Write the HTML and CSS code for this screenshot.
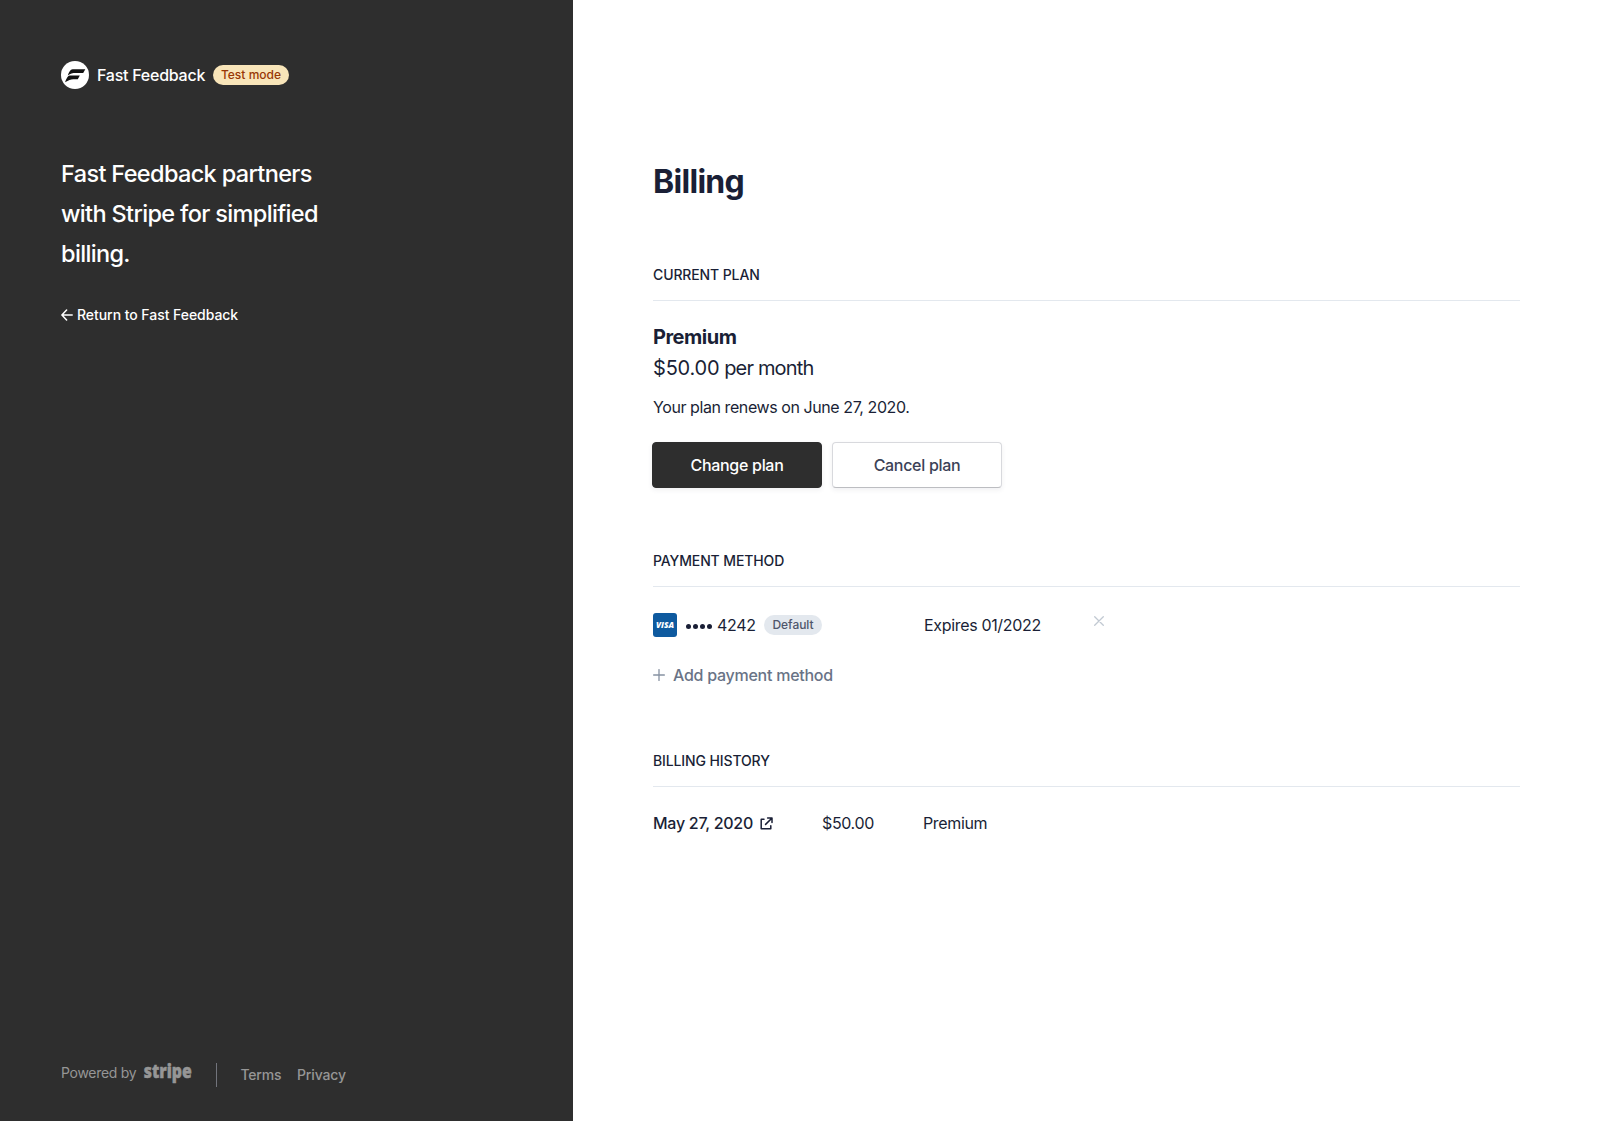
FILE: index.html
```html
<!DOCTYPE html>
<html lang="en">
<head>
<meta charset="utf-8">
<title>Billing</title>
<link rel="stylesheet" href="styles.css">
</head>
<body>
<div class="layout">
  <aside class="sidebar">
    <div class="brand">
      <svg class="brand-logo" width="28" height="28" viewBox="0 0 28 28"><circle cx="14" cy="14" r="14" fill="#fff"/><path d="M11.6 8.3H24.3L22.2 12H14.8C11.4 12 9.5 12.6 6.8 14.6C8 11 9.2 8.6 11.6 8.3ZM8.8 14.6H18.8L16.8 18.2H12.2C9.6 18.2 7.8 19.4 4 21.3C5.2 18.7 6.4 15 8.8 14.6Z" fill="#111"/></svg>
      <span class="brand-name">Fast Feedback</span>
      <span class="badge badge-test">Test mode</span>
    </div>
    <h2 class="tagline">Fast Feedback partners<br>with Stripe for simplified<br>billing.</h2>
    <a class="return"><svg width="12" height="12" viewBox="0 0 12 12" fill="none" stroke="#fff" stroke-width="1.5" stroke-linecap="round" stroke-linejoin="round"><path d="M11.2 6H1M5.6 1L.9 6l4.7 5"/></svg><span>Return to Fast Feedback</span></a>
    <footer class="footer">
      <span class="powered">Powered by</span>
      <svg class="stripe" width="49" height="24" viewBox="0 0 49 24"><text x="0.8" y="15.3" textLength="48" lengthAdjust="spacingAndGlyphs">stripe</text></svg>
      <span class="divider"></span>
      <a class="terms">Terms</a>
      <a class="privacy">Privacy</a>
    </footer>
  </aside>
  <main class="main">
    <h1 class="title">Billing</h1>
    <section class="section">
      <h3 class="section-title">Current plan</h3>
      <div class="plan-name">Premium</div>
      <div class="plan-price"><span class="price">$50.00</span> per month</div>
      <div class="plan-renewal">Your plan renews on June 27, 2020.</div>
      <div class="actions">
        <button class="button button-primary">Change plan</button>
        <button class="button button-secondary">Cancel plan</button>
      </div>
    </section>
    <section class="section section-method">
      <h3 class="section-title">Payment method</h3>
      <div class="method-row">
        <div class="card">
          <svg width="24" height="24" viewBox="0 0 24 24"><rect width="24" height="24" rx="3" fill="#0e5a9f"/><text class="visa" x="3" y="15" textLength="18" lengthAdjust="spacingAndGlyphs">VISA</text></svg>
          <span class="dots"><i></i><i></i><i></i><i></i></span>
          <span class="digits">4242</span>
          <span class="badge badge-default">Default</span>
        </div>
        <span class="expires">Expires 01/2022</span>
        <svg class="remove" width="10" height="10" viewBox="0 0 10 10" stroke="#c1c9d2" stroke-width="1.3" stroke-linecap="round"><path d="M.7.7l8.6 8.6M9.3.7L.7 9.3"/></svg>
      </div>
      <a class="add"><svg width="12" height="12" viewBox="0 0 12 12" stroke="#8792a2" stroke-width="1.3" stroke-linecap="round"><path d="M6 .6v10.8M.6 6h10.8"/></svg><span>Add payment method</span></a>
    </section>
    <section class="section">
      <h3 class="section-title">Billing history</h3>
      <div class="history-row">
        <a class="invoice"><span>May 27, 2020</span><svg width="13" height="13" viewBox="0 0 13 13" fill="none" stroke="#1a1f36" stroke-width="1.5" stroke-linejoin="round" stroke-linecap="round"><path d="M4 2.2H1.2v9.6h9.6V8.7M7.6 1H12v4.4M11.8 1.2L5.6 7.4"/></svg></a>
        <span class="amount">$50.00</span>
        <span class="product">Premium</span>
      </div>
    </section>
  </main>
</div>
</body>
</html>
```
FILE: styles.css
```css
* { box-sizing: border-box; }
body {
  margin: 0;
  font-family: Inter, "Liberation Sans", sans-serif;
  font-size: 16px;
  line-height: 24px;
  color: #1a1f36;
  background: #fff;
}
h1, h2, h3 { margin: 0; font-weight: 500; }
.layout { display: flex; height: 1121px; }
.sidebar {
  display: flex;
  flex-direction: column;
  width: 573px;
  flex: none;
  padding: 61px 61px 34px;
  background: #2e2e2e;
  color: #fff;
  white-space: nowrap;
}
.brand { display: flex; align-items: center; height: 28px; }
.brand-name { margin-left: 8px; width: 108px; font-weight: 500; letter-spacing: -0.25px; }
.badge {
  display: flex;
  align-items: center;
  justify-content: center;
  height: 20px;
  border-radius: 10px;
  font-size: 12px;
  font-weight: 500;
  line-height: 20px;
}
.badge-test { margin-left: 8px; width: 76px; background: #f8e5b9; color: #983705; letter-spacing: 0.02px; }
.tagline { margin-top: 65px; font-size: 23.5px; line-height: 40px; letter-spacing: -0.65px; }
.return { display: flex; align-items: center; gap: 4px; margin-top: 31px; font-size: 14px; font-weight: 500; line-height: 20px; letter-spacing: -0.05px; }
.footer { display: flex; align-items: center; height: 24px; margin-top: auto; font-size: 14px; line-height: 20px; color: #969696; }
.powered { width: 75px; margin-top: -4px; letter-spacing: -0.3px; }
.stripe { margin-left: 7px; overflow: visible; }
.stripe text { font: 800 19px "Open Sans", sans-serif; fill: #969696; stroke: #969696; stroke-width: 0.5px; }
.divider { width: 1px; height: 24px; margin-left: 24px; background: #72747c; }
.terms { width: 40px; margin-left: 23.5px; font-weight: 500; letter-spacing: -0.2px; }
.privacy { margin-left: 16.5px; font-weight: 500; letter-spacing: -0.15px; }

.main { flex: 1; padding: 162px 77px 0 80px; }
.title { font-size: 32px; font-weight: 700; line-height: 40px; letter-spacing: -0.7px; }
.section { margin-top: 64px; }
.title + .section { margin-top: 63px; }
.section-method { margin-top: 63px; }
.section-title {
  padding-bottom: 15px;
  border-bottom: 1px solid #e3e8ee;
  font-size: 14px;
  line-height: 20px;
  letter-spacing: -0.12px;
  text-transform: uppercase;
}
.plan-name { margin-top: 22px; font-size: 20px; font-weight: 700; line-height: 28px; letter-spacing: -0.5px; }
.plan-price { margin-top: 3px; font-size: 20px; line-height: 28px; letter-spacing: -0.83px; }
.price { letter-spacing: -0.2px; }
.plan-renewal { margin-top: 13px; letter-spacing: -0.42px; }
.actions { display: flex; gap: 10px; margin: 23px 0 0 -1px; }
.button {
  width: 170px;
  height: 46px;
  padding: 0;
  border: 1px solid #2e2e2e;
  border-radius: 4px;
  font: 500 16px/24px Inter, "Liberation Sans", sans-serif;
  letter-spacing: -0.3px;
}
.button-primary { background: #2e2e2e; color: #fff; box-shadow: 0 2px 5px rgba(60, 66, 87, 0.08); }
.button-secondary { background: #fff; color: #3c4257; border-color: #d8d9dd; border-bottom-color: #bcbdc1; box-shadow: 0 2px 5px rgba(60, 66, 87, 0.08); }

.method-row { display: grid; grid-template-columns: 271px 170px auto; height: 24px; margin-top: 26px; }
.card { display: flex; align-items: center; }
.visa { font: italic 800 8px "Open Sans", sans-serif; fill: #fff; }
.dots { display: flex; gap: 2px; margin: 3px 0 0 9px; }
.dots i { width: 5px; height: 5px; border-radius: 50%; background: #1a1f36; }
.digits { width: 39px; margin-left: 5px; letter-spacing: -0.3px; }
.badge-default { margin-left: 8px; width: 58px; background: #e3e8ee; color: #4f566b; letter-spacing: -0.05px; }
.expires { letter-spacing: -0.33px; }
.remove { margin-top: 3px; }
.add { display: flex; align-items: center; gap: 8px; margin-top: 26px; color: #697386; font-weight: 500; letter-spacing: -0.26px; }
.history-row { display: grid; grid-template-columns: 169px 101px auto; margin-top: 24px; }
.invoice { display: flex; align-items: center; font-weight: 500; letter-spacing: -0.27px; }
.invoice span { width: 107px; }
.amount, .product { letter-spacing: -0.36px; }
```
